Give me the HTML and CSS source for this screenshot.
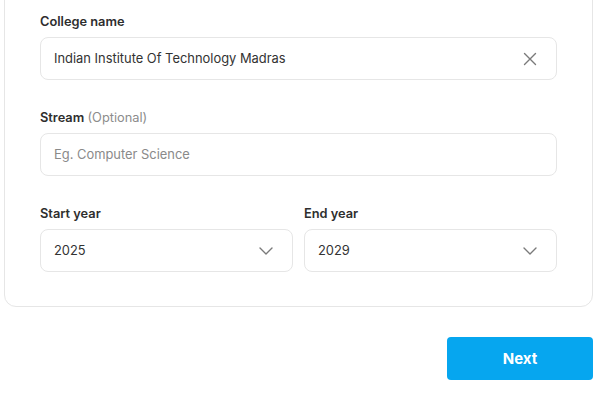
FILE: index.html
```html
<!DOCTYPE html>
<html>
<head>
<meta charset="utf-8">
<link rel="stylesheet" href="styles.css">
</head>
<body>
<div class="page">
  <div class="card">
    <div class="field">
      <label class="label">College name</label>
      <div class="input">
        <span class="value">Indian Institute Of Technology Madras</span>
        <svg class="icon-x" width="14" height="14" viewBox="0 0 14 14"><path d="M1.5 1.5 L12.5 12.5 M12.5 1.5 L1.5 12.5" stroke="#7a7a7a" stroke-width="1.4" stroke-linecap="round" fill="none"/></svg>
      </div>
    </div>
    <div class="field">
      <label class="label">Stream <span class="opt">(Optional)</span></label>
      <div class="input">
        <span class="placeholder">Eg. Computer Science</span>
      </div>
    </div>
    <div class="row">
      <div class="field">
        <label class="label">Start year</label>
        <div class="input">
          <span class="value">2025</span>
          <svg class="icon-chev" width="14" height="8" viewBox="0 0 14 8"><path d="M1 1 L7 7 L13 1" stroke="#7a7a7a" stroke-width="1.4" stroke-linecap="round" stroke-linejoin="round" fill="none"/></svg>
        </div>
      </div>
      <div class="field">
        <label class="label">End year</label>
        <div class="input">
          <span class="value">2029</span>
          <svg class="icon-chev" width="14" height="8" viewBox="0 0 14 8"><path d="M1 1 L7 7 L13 1" stroke="#7a7a7a" stroke-width="1.4" stroke-linecap="round" stroke-linejoin="round" fill="none"/></svg>
        </div>
      </div>
    </div>
  </div>
  <div class="actions">
    <button class="btn-next">Next</button>
  </div>
</div>
</body>
</html>
```
FILE: styles.css
```css
html, body {
  margin: 0;
  padding: 0;
  background: #ffffff;
}
body {
  font-family: Inter, "Noto Sans", sans-serif;
  color: #333333;
}
.page {
  padding: 0 7px 0 4px;
}
.card {
  margin-top: -22px;
  border: 1px solid #e6e6e6;
  border-radius: 12px;
  padding: 35px 35px 34px 35px;
  display: flex;
  flex-direction: column;
  gap: 30px;
}
.field {
  display: flex;
  flex-direction: column;
  gap: 7px;
  flex: 1;
}
.label {
  font-size: 12.8px;
  line-height: 16px;
  font-weight: 600;
  color: #2e2e2e;
}
.opt {
  font-weight: 400;
  color: #8c8c8c;
}
.input {
  height: 41px;
  border: 1px solid #e6e6e6;
  border-radius: 8px;
  display: flex;
  align-items: center;
  justify-content: space-between;
  padding: 0 19px 0 13px;
}
.value {
  font-size: 12.9px;
  color: #333333;
}
.placeholder {
  font-size: 12.9px;
  color: #8a8a8a;
}
.icon-x {
  display: block;
}
.icon-chev {
  display: block;
}
.row {
  display: flex;
  gap: 11px;
}
.actions {
  display: flex;
  justify-content: flex-end;
  margin-top: 30px;
}
.btn-next {
  width: 146px;
  height: 43px;
  border: none;
  border-radius: 4px;
  background: #06a6ef;
  color: #ffffff;
  font-family: Inter, "Noto Sans", sans-serif;
  font-size: 15px;
  font-weight: 700;
}
```
